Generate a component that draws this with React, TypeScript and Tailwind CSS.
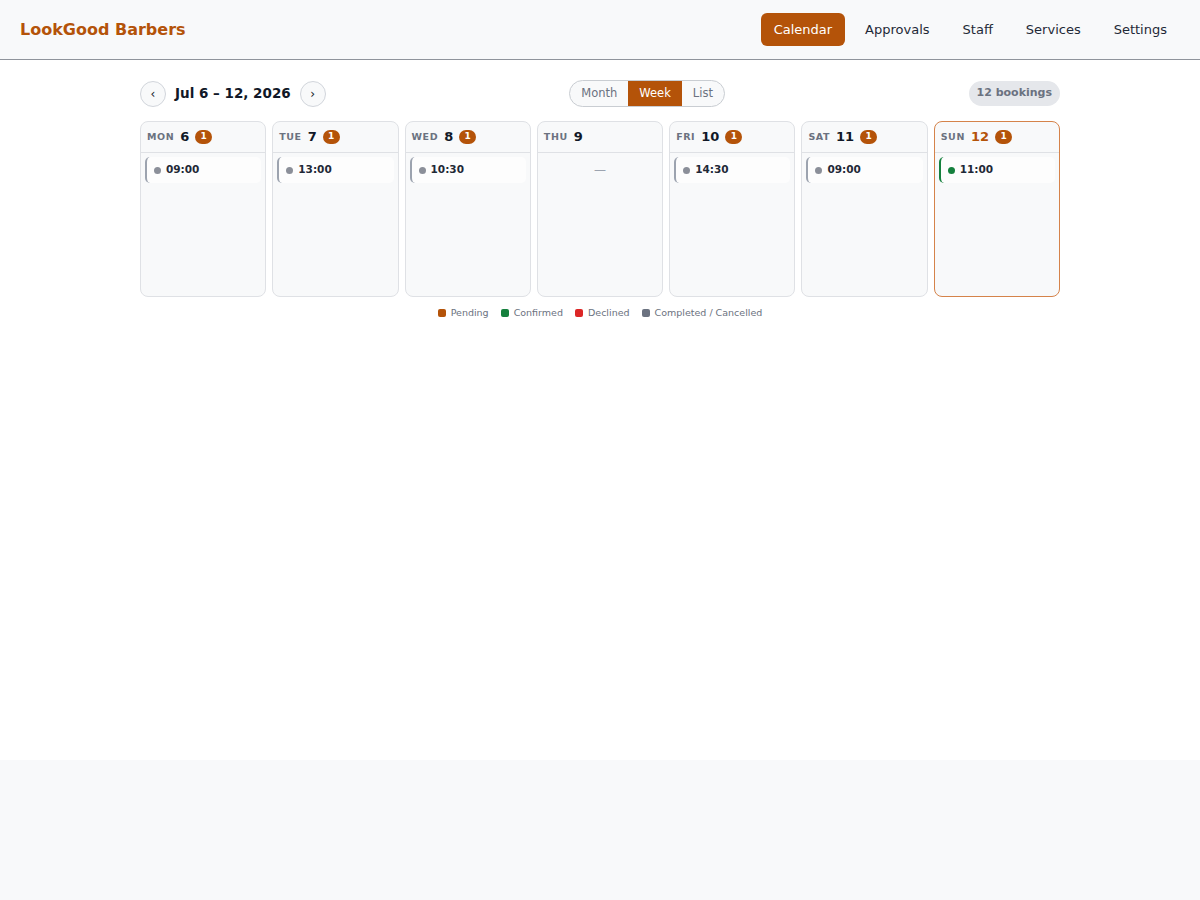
import { useState } from "react"

type Status = "pending" | "confirmed" | "declined" | "done"

type Day = {
  dow: string
  date: number
  count: number
  time?: string
  status?: Status
  today?: boolean
}

const days: Day[] = [
  { dow: "MON", date: 6, count: 1, time: "09:00", status: "done" },
  { dow: "TUE", date: 7, count: 1, time: "13:00", status: "done" },
  { dow: "WED", date: 8, count: 1, time: "10:30", status: "done" },
  { dow: "THU", date: 9, count: 0 },
  { dow: "FRI", date: 10, count: 1, time: "14:30", status: "done" },
  { dow: "SAT", date: 11, count: 1, time: "09:00", status: "done" },
  { dow: "SUN", date: 12, count: 1, time: "11:00", status: "confirmed", today: true },
]

const barColor: Record<Status, string> = {
  pending: "border-[#b45309]",
  confirmed: "border-[#15803d]",
  declined: "border-[#dc2626]",
  done: "border-[#9ca3af]",
}

const dotColor: Record<Status, string> = {
  pending: "bg-[#b45309]",
  confirmed: "bg-[#15803d]",
  declined: "bg-[#dc2626]",
  done: "bg-[#8b8f99]",
}

const navItems = ["Calendar", "Approvals", "Staff", "Services", "Settings"]

const legend = [
  { label: "Pending", color: "bg-[#b45309]" },
  { label: "Confirmed", color: "bg-[#15803d]" },
  { label: "Declined", color: "bg-[#dc2626]" },
  { label: "Completed / Cancelled", color: "bg-[#6b7280]" },
]

function DayColumn({ day }: { day: Day }) {
  return (
    <div
      className={
        "flex h-[176px] flex-col rounded-lg border bg-[#f8f9fa] " +
        (day.today ? "border-[#d5834a]" : "border-[#dfe1e5]")
      }
    >
      <div className="flex h-[31px] items-center gap-1.5 border-b border-[#dfe1e5] px-[6px]">
        <span className="text-[9.5px] font-bold tracking-[0.06em] text-[#6b7280]">{day.dow}</span>
        <span className={"text-[13px] font-bold " + (day.today ? "text-[#b45309]" : "text-[#111827]")}>
          {day.date}
        </span>
        {day.count > 0 && (
          <span className="flex h-[14px] w-[17px] items-center justify-center rounded-full bg-[#b45309] text-[9px] font-bold text-white">
            {day.count}
          </span>
        )}
      </div>
      <div className="p-1">
        {day.time && day.status ? (
          <div
            className={
              "flex h-[26px] items-center gap-[5px] rounded-[5px] border-l-2 bg-[#fdfdfd] pl-[7px] " +
              barColor[day.status]
            }
          >
            <span className={"h-[7px] w-[7px] rounded-full " + dotColor[day.status]} />
            <span className="text-[10.5px] font-bold text-[#1f2937]">{day.time}</span>
          </div>
        ) : (
          <div className="flex h-[26px] items-center justify-center text-[12px] text-[#9ca3af]">—</div>
        )}
      </div>
    </div>
  )
}

export default function App() {
  const [view, setView] = useState<"Month" | "Week" | "List">("Week")

  return (
    <div className="min-h-[900px] bg-[#f8f9fa] font-['DejaVu_Sans',sans-serif]">
      <header className="flex h-[60px] items-center justify-between border-b border-[#8f949b] bg-[#f8f9fa] px-5">
        <h1 className="text-[16px] font-bold text-[#b45309]">LookGood Barbers</h1>
        <nav className="flex items-center gap-[7px]">
          {navItems.map((item) => (
            <button
              key={item}
              className={
                "h-[33px] rounded-md px-[13px] text-[13px] " +
                (item === "Calendar" ? "bg-[#b45309] text-white" : "text-[#1f2937]")
              }
            >
              {item}
            </button>
          ))}
        </nav>
      </header>

      <main className="h-[700px] bg-white pt-5">
        <div className="mx-auto w-[920px]">
          <div className="flex h-[27px] items-center justify-between">
            <div className="flex items-center gap-[9px]">
              <button className="flex h-[26px] w-[26px] items-center justify-center rounded-full border border-[#d1d5db] bg-[#f8f9fa] text-[12px] text-[#111827]">
                ‹
              </button>
              <span className="text-[13.5px] font-bold text-[#111827]">Jul 6 – 12, 2026</span>
              <button className="flex h-[26px] w-[26px] items-center justify-center rounded-full border border-[#d1d5db] bg-[#f8f9fa] text-[12px] text-[#111827]">
                ›
              </button>
            </div>
            <div className="flex h-[27px] overflow-hidden rounded-full border border-[#c9cdd2] bg-[#f8f9fa]">
              {(["Month", "Week", "List"] as const).map((v) => (
                <button
                  key={v}
                  onClick={() => setView(v)}
                  className={
                    "px-[11px] text-[11.5px] " +
                    (view === v ? "bg-[#b45309] text-white" : "text-[#6b7280]")
                  }
                >
                  {v}
                </button>
              ))}
            </div>
            <span className="rounded-full bg-[#e5e7eb] px-2 py-[4px] text-[11px] font-bold text-[#6b7280]">
              12 bookings
            </span>
          </div>

          <div className="mt-[14px] grid grid-cols-7 gap-1.5">
            {days.map((d) => (
              <DayColumn key={d.dow} day={d} />
            ))}
          </div>

          <div className="mt-[9px] flex items-center justify-center gap-3 text-[9.5px] text-[#6b7280]">
            {legend.map((l) => (
              <span key={l.label} className="flex items-center gap-[5px]">
                <span className={"h-[8px] w-[8px] rounded-[2px] " + l.color} />
                {l.label}
              </span>
            ))}
          </div>
        </div>
      </main>
    </div>
  )
}
